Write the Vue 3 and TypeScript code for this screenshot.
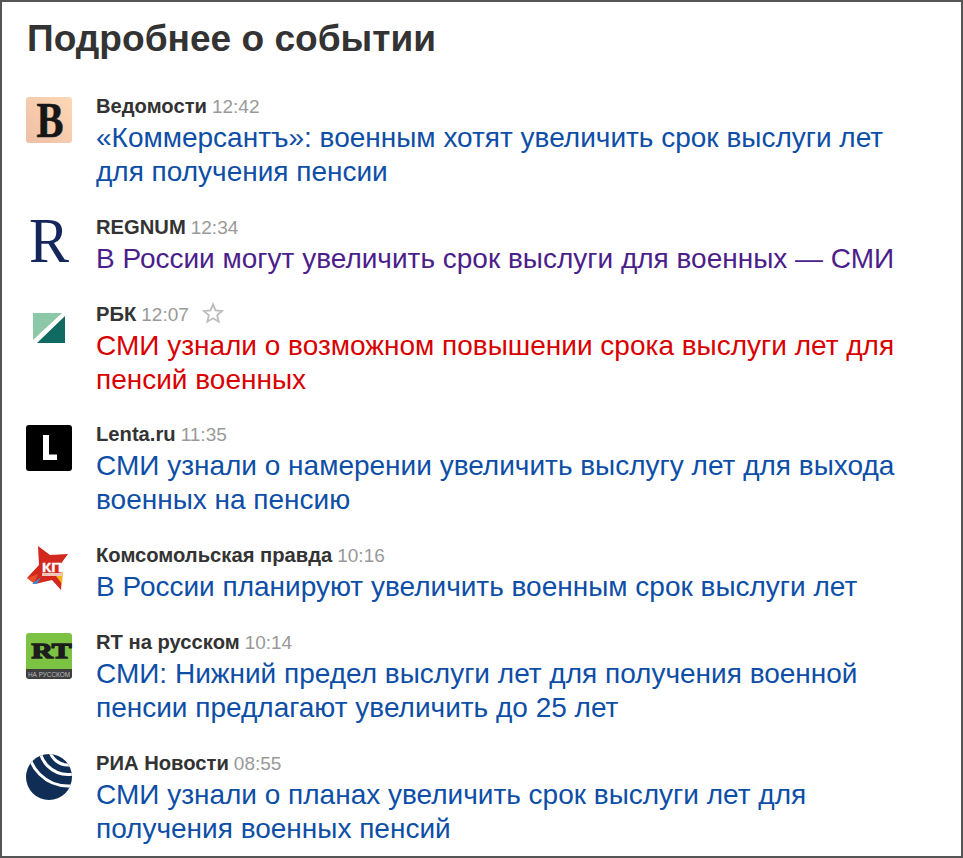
<script setup lang="ts">
interface Item {
  source: string
  time: string
  title: string
  logo: string
  tone: string
  star?: boolean
}

const items: Item[] = [
  { source: 'Ведомости', time: '12:42', title: '«Коммерсантъ»: военным хотят увеличить срок выслуги лет для получения пенсии', logo: 'ved', tone: 'blue' },
  { source: 'REGNUM', time: '12:34', title: 'В России могут увеличить срок выслуги для военных — СМИ', logo: 'reg', tone: 'visited' },
  { source: 'РБК', time: '12:07', title: 'СМИ узнали о возможном повышении срока выслуги лет для пенсий военных', logo: 'rbc', tone: 'red', star: true },
  { source: 'Lenta.ru', time: '11:35', title: 'СМИ узнали о намерении увеличить выслугу лет для выхода военных на пенсию', logo: 'lenta', tone: 'blue' },
  { source: 'Комсомольская правда', time: '10:16', title: 'В России планируют увеличить военным срок выслуги лет', logo: 'kp', tone: 'blue' },
  { source: 'RT на русском', time: '10:14', title: 'СМИ: Нижний предел выслуги лет для получения военной пенсии предлагают увеличить до 25 лет', logo: 'rt', tone: 'blue' },
  { source: 'РИА Новости', time: '08:55', title: 'СМИ узнали о планах увеличить срок выслуги лет для получения военных пенсий', logo: 'ria', tone: 'blue' },
]
</script>

<template>
  <div class="page">
    <h1 class="heading">Подробнее о событии</h1>
    <ul class="list">
      <li v-for="item in items" :key="item.source" class="row">
        <div class="logo">
          <svg v-if="item.logo === 'ved'" viewBox="0 0 46 46" width="46" height="46">
            <defs>
              <linearGradient id="vedBg" x1="0" y1="1" x2="1" y2="0">
                <stop offset="0" stop-color="#efbfa6" />
                <stop offset="1" stop-color="#fdd8b5" />
              </linearGradient>
            </defs>
            <rect width="46" height="46" rx="3" fill="url(#vedBg)" />
            <text x="24" y="40" text-anchor="middle" class="serif-bold b-mark" font-size="51" fill="#161616" textLength="27" lengthAdjust="spacingAndGlyphs">В</text>
          </svg>
          <svg v-else-if="item.logo === 'reg'" viewBox="0 0 46 46" width="46" height="46">
            <text x="23" y="44" text-anchor="middle" class="serif" font-size="63" fill="#14265c" textLength="40" lengthAdjust="spacingAndGlyphs">R</text>
          </svg>
          <svg v-else-if="item.logo === 'rbc'" viewBox="0 0 46 46" width="46" height="46">
            <polygon points="7,8 36,8 7,35" fill="#8cc8a8" />
            <polygon points="39,11 39,38 11,38" fill="#0f6a62" />
          </svg>
          <svg v-else-if="item.logo === 'lenta'" viewBox="0 0 46 46" width="46" height="46">
            <rect width="46" height="46" rx="3" fill="#000" />
            <polygon points="17,10 23,10 23,29.5 31,29.5 31,35 17,35" fill="#fff" />
          </svg>
          <svg v-else-if="item.logo === 'kp'" viewBox="0 0 46 46" width="46" height="46">
            <polygon points="12,0 24,9 42,8 34,19 36,30 35,44 26,34 9,38 1,32 13,19" fill="#d2281e" />
            <polygon points="1,32 12,28 8,37" fill="#e8502a" />
            <polygon points="6,38 15,31 11,38" fill="#3a8fd0" />
            <polygon points="30,30 37,26 36,38" fill="#f2b21c" />
            <text x="26" y="26" text-anchor="middle" class="sans-bold kp-mark" font-size="12" fill="#fff" textLength="20" lengthAdjust="spacingAndGlyphs">КП</text>
            <rect x="16" y="27" width="20" height="3" fill="#f2c4ba" />
          </svg>
          <svg v-else-if="item.logo === 'rt'" viewBox="0 0 46 46" width="46" height="46">
            <path d="M3 0H43a3 3 0 0 1 3 3V36H0V3a3 3 0 0 1 3-3Z" fill="#7cc243" />
            <path d="M0 36H46V43a3 3 0 0 1-3 3H3a3 3 0 0 1-3-3Z" fill="#3e3e40" />
            <text x="5.5" y="24.5" class="serif-bold rt-mark" font-size="21" fill="#1c1c1c" textLength="40" lengthAdjust="spacingAndGlyphs">RT</text>
            <text x="23" y="44" text-anchor="middle" class="sans" font-size="7" fill="#bbb" textLength="42" lengthAdjust="spacingAndGlyphs">НА РУССКОМ</text>
          </svg>
          <svg v-else viewBox="0 0 46 46" width="46" height="46">
            <defs>
              <clipPath id="riaClip"><circle cx="23" cy="23" r="23" /></clipPath>
            </defs>
            <circle cx="23" cy="23" r="23" fill="#0f2d55" />
            <g clip-path="url(#riaClip)" fill="none" stroke="#fff">
              <circle cx="42" cy="-8" r="12" fill="#fff" stroke="none" />
              <circle cx="42" cy="-8" r="19" stroke-width="3" />
              <circle cx="42" cy="-8" r="28.5" stroke-width="3" />
              <circle cx="42" cy="-8" r="40" stroke-width="3" />
            </g>
          </svg>
        </div>
        <div class="body">
          <div class="meta">
            <span class="source">{{ item.source }}</span>
            <span class="time">{{ item.time }}</span>
            <svg v-if="item.star" class="star" viewBox="0 0 24 24" width="22" height="22">
              <polygon points="12,2.5 14.8,9.2 22,9.8 16.5,14.5 18.2,21.5 12,17.8 5.8,21.5 7.5,14.5 2,9.8 9.2,9.2" fill="none" stroke="#bdbdbd" stroke-width="2" />
            </svg>
          </div>
          <a class="title" :class="item.tone" href="#">{{ item.title }}</a>
        </div>
      </li>
    </ul>
  </div>
</template>

<style>
html, body { margin: 0; background: #fff; }
</style>

<style scoped>
.page {
  box-sizing: border-box;
  width: 963px;
  height: 858px;
  overflow: hidden;
  border: 2px solid #555;
  padding: 14px 40px 0 24px;
  background: #fff;
  font-family: "Liberation Sans", Arial, sans-serif;
}
.heading {
  margin: 0 0 0 1px;
  font-size: 37.1px;
  line-height: 44px;
  font-weight: 700;
  color: #333;
}
.list {
  list-style: none;
  margin: 32px 0 0;
  padding: 0;
  display: flex;
  flex-direction: column;
  gap: 23.8px;
}
.row {
  display: flex;
  gap: 24px;
}
.logo {
  flex: 0 0 46px;
  width: 46px;
  height: 46px;
  margin-top: 5px;
}
.logo svg { display: block; overflow: visible; }
.serif { font-family: "Liberation Serif", serif; }
.serif-bold { font-family: "Liberation Serif", serif; font-weight: 700; }
.sans { font-family: "Liberation Sans", sans-serif; }
.sans-bold { font-family: "Liberation Sans", sans-serif; font-weight: 700; }
.b-mark { stroke: #161616; stroke-width: 0.6; }
.kp-mark { stroke: #fff; stroke-width: 0.3; }
.rt-mark { stroke: #1c1c1c; stroke-width: 1.3; }
.body { flex: 1; min-width: 0; }
.meta {
  display: flex;
  align-items: baseline;
  gap: 5px;
  height: 29px;
  line-height: 28px;
}
.source { font-size: 20.2px; font-weight: 700; color: #333; }
.time { font-size: 19px; color: #999; }
.star { margin: -3px 0 0 8px; align-self: center; }
.title {
  display: block;
  font-size: 28px;
  line-height: 34px;
  text-decoration: none;
}
.blue { color: #0d4ea6; }
.visited { color: #4b1e8a; }
.red { color: #d80000; }
</style>
